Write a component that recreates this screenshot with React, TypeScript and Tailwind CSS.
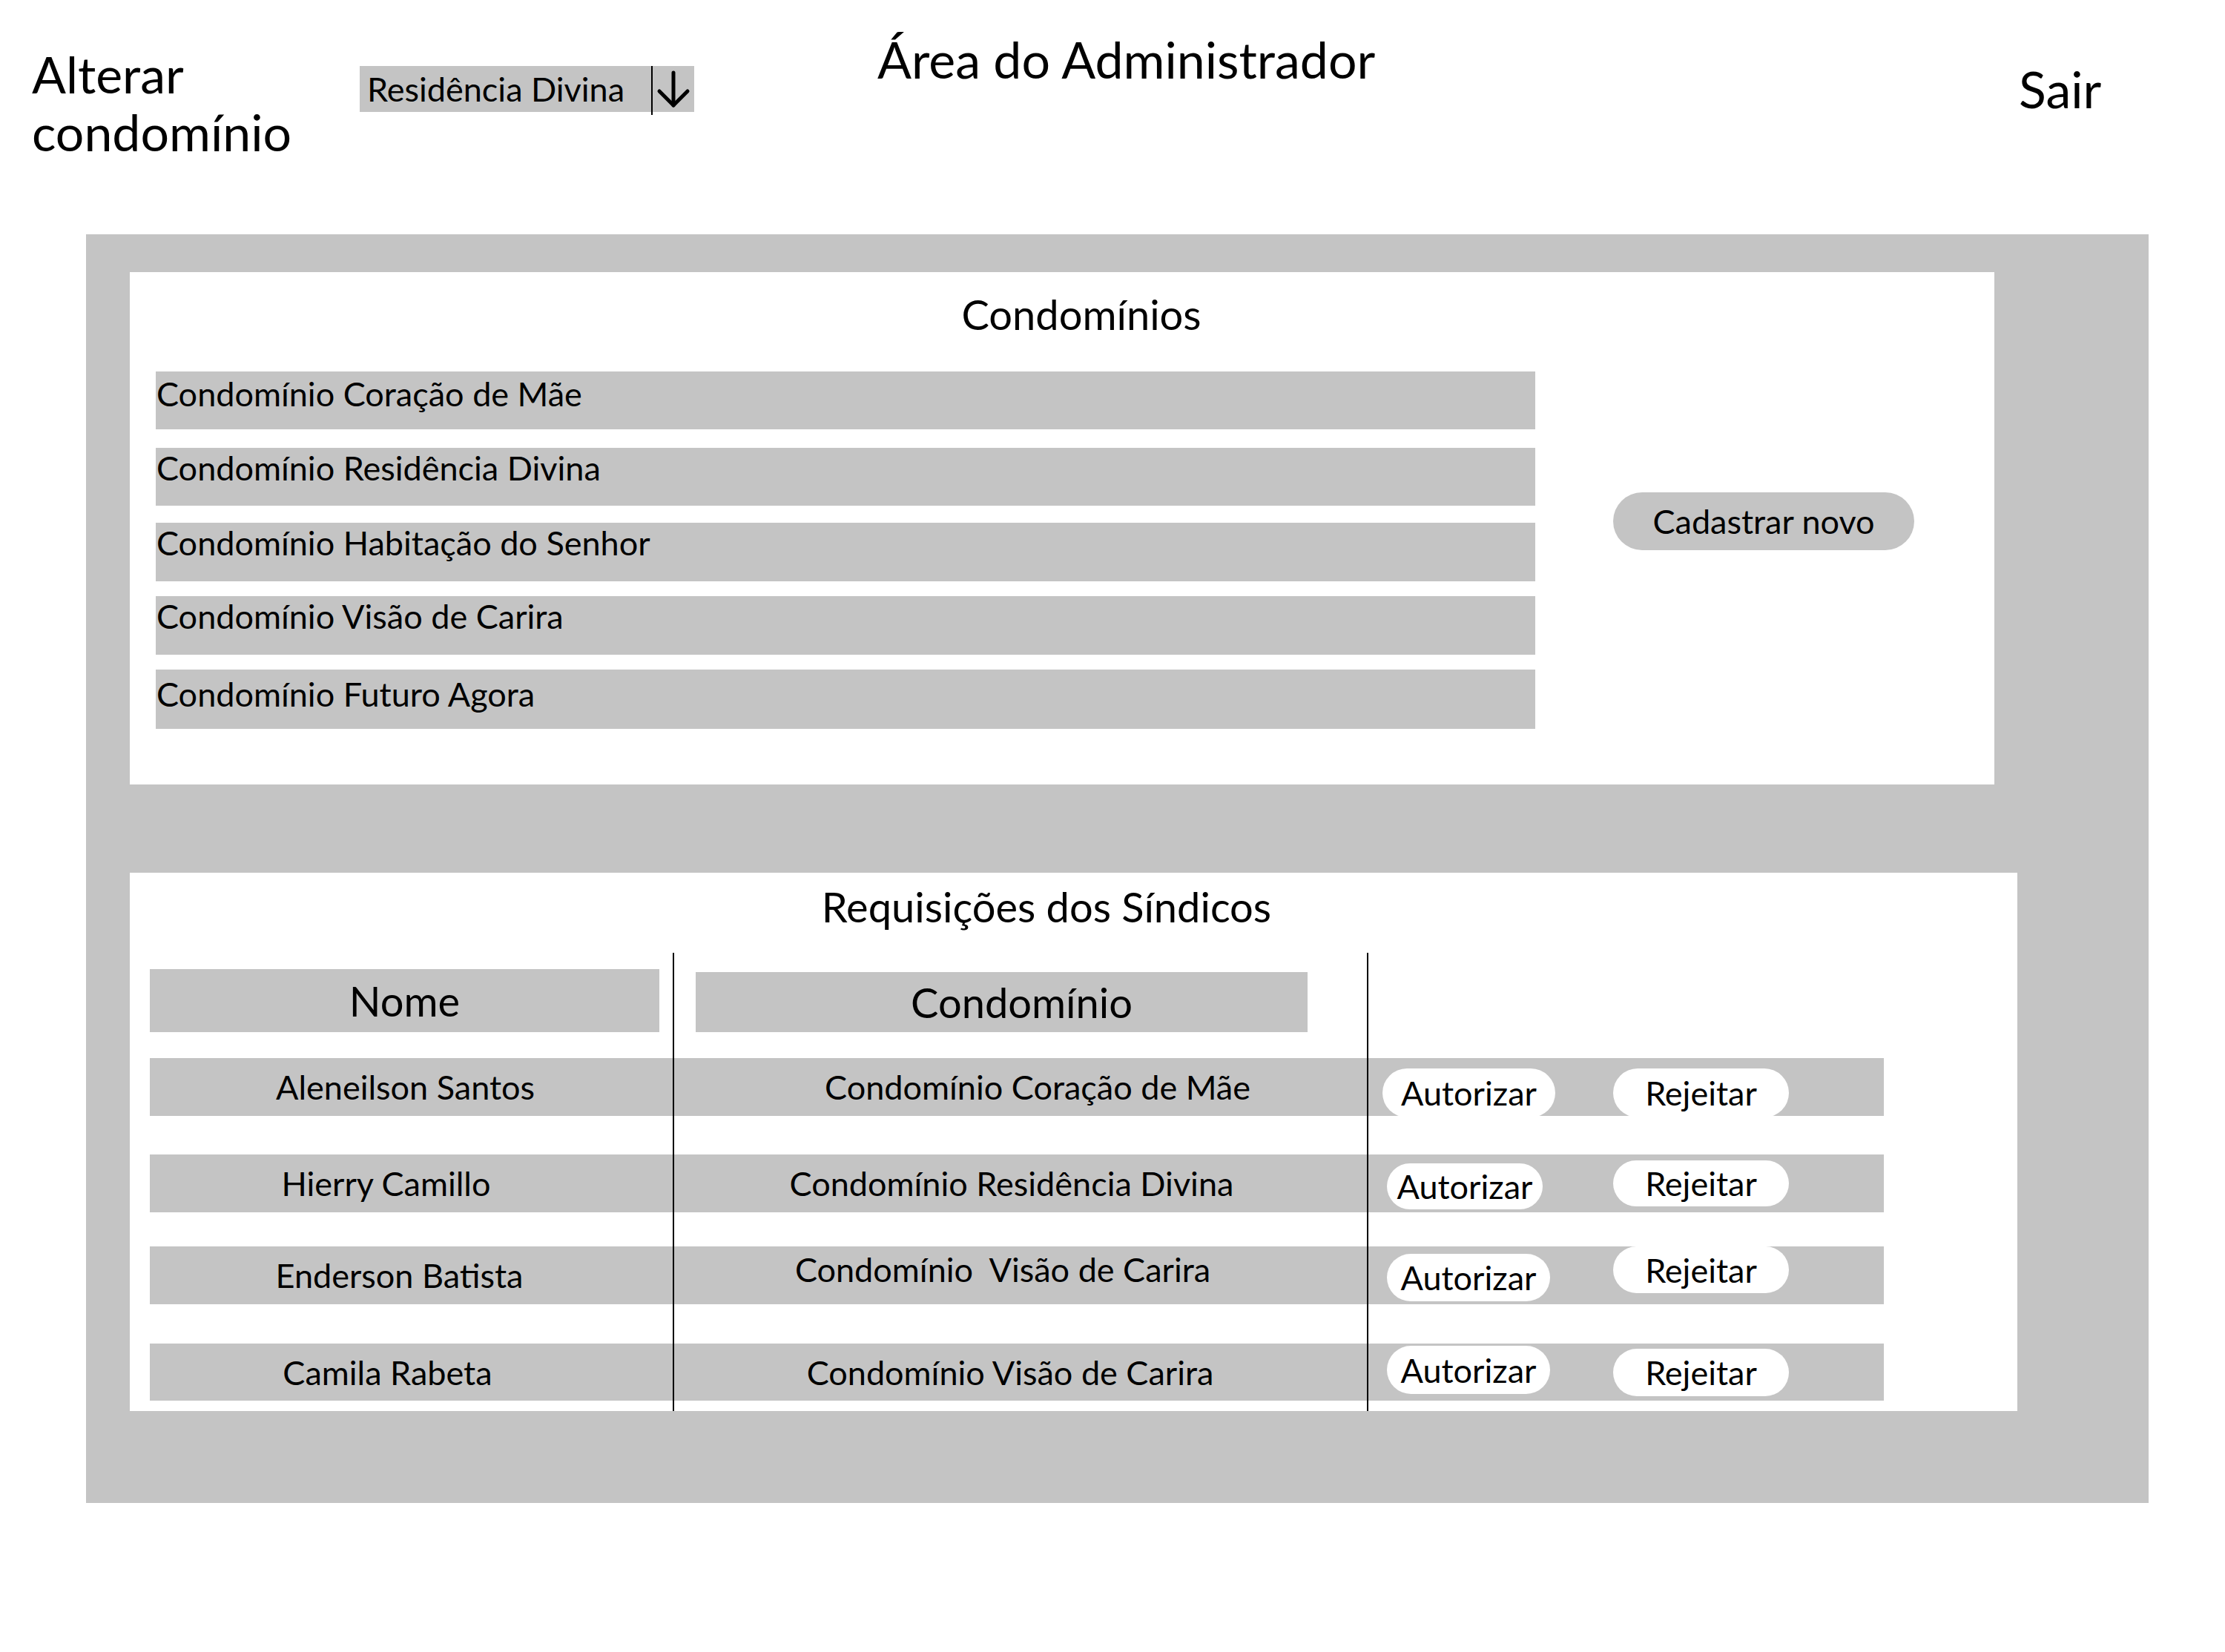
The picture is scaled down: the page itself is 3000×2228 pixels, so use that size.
import React from "react";

const font = { fontFamily: "Lato, 'Noto Sans', sans-serif" };

type Row1 = { t: string; cls: string };
const condRows: Row1[] = [
  { t: "Condomínio Coração de Mãe", cls: "h-[78px] pt-[3px]" },
  { t: "Condomínio Residência Divina", cls: "mt-[25px] h-[78px] pt-0" },
  { t: "Condomínio Habitação do Senhor", cls: "mt-[23px] h-[79px] pt-0" },
  { t: "Condomínio Visão de Carira", cls: "mt-[20px] h-[79px] pt-0" },
  { t: "Condomínio Futuro Agora", cls: "mt-[20px] h-[80px] pt-[6px]" },
];

const rowBox = [
  "mt-[35px] h-[78px]",
  "mt-[52px] h-[78px]",
  "mt-[46px] h-[78px]",
  "mt-[53px] h-[77px]",
];

const names = [
  { t: "Aleneilson Santos", cls: "pr-[16px]" },
  { t: "Hierry Camillo", cls: "pr-[68px]" },
  { t: "Enderson Batista", cls: "pr-[32px]" },
  { t: "Camila Rabeta", cls: "pr-[64px]" },
];

const conds = [
  { t: "Condomínio Coração de Mãe", cls: "pl-[46px]" },
  { t: "Condomínio Residência Divina", cls: "pr-[24px]" },
  { t: "Condomínio  Visão de Carira", cls: "pr-[48px] pb-[16px]" },
  { t: "Condomínio Visão de Carira", cls: "pr-[28px]" },
];

const actions = [
  { a: "ml-[19px] mt-[14px] w-[233px] h-[66px]", r: "ml-[78px] mt-[14px] w-[237px] h-[66px]" },
  { a: "ml-[25px] mt-[12px] w-[210px] h-[62px]", r: "ml-[95px] mt-[8px] w-[237px] h-[62px]" },
  { a: "ml-[25px] mt-[10px] w-[220px] h-[64px]", r: "ml-[85px] mt-0 w-[237px] h-[63px]" },
  { a: "ml-[25px] mt-[3px] w-[220px] h-[65px]", r: "ml-[85px] mt-[7px] w-[237px] h-[64px]" },
];

function ArrowDownIcon() {
  return (
    <svg width="48" height="52" viewBox="0 0 48 52" fill="none" stroke="#000" strokeWidth="5" strokeLinecap="round" strokeLinejoin="round">
      <path d="M24 4 V48" />
      <path d="M5 29 L24 48 L43 29" />
    </svg>
  );
}

export default function App() {
  return (
    <div className="w-[3000px] h-[2228px] bg-white text-black overflow-hidden" style={font}>
      {/* Header */}
      <div className="flex items-start h-[316px]">
        <div className="ml-[43px] mt-[61px] w-[442px] text-[68px] leading-[78px]">
          Alterar
          <br />
          condomínio
        </div>
        <div className="mt-[89px] w-[451px] h-[62px] bg-[#c4c4c4] flex items-start relative">
          <div className="w-[393px] h-[62px] flex items-center pl-[10px] text-[45px] leading-[54px]">
            Residência Divina
          </div>
          <div className="w-[2px] h-[66px] bg-black" />
          <div className="flex-1 h-[62px] flex items-center justify-center">
            <ArrowDownIcon />
          </div>
        </div>
        <div className="ml-[247px] mt-[41px] w-[1539px] text-[68px] leading-[78px]">Área do Administrador</div>
        <div className="mt-[81px] text-[68px] leading-[78px]">Sair</div>
      </div>

      {/* Main gray area */}
      <div className="ml-[116px] w-[2781px] h-[1711px] bg-[#c4c4c4] pt-[51px] pl-[59px]">
        {/* Condomínios panel */}
        <div className="w-[2514px] h-[691px] bg-white flex flex-col">
          <div className="pt-[23px] pl-[52px] text-center text-[56px] leading-[68px]">Condomínios</div>
          <div className="mt-[43px] pl-[35px] flex items-start">
            <div className="w-[1860px] flex flex-col">
              {condRows.map((r) => (
                <div key={r.t} className={"bg-[#c4c4c4] pl-[1px] text-[45px] leading-[54px] " + r.cls}>
                  {r.t}
                </div>
              ))}
            </div>
            <div className="ml-[105px] mt-[163px] w-[406px] h-[78px] rounded-full bg-[#c4c4c4] flex items-center justify-center text-[45px] leading-[54px]">
              Cadastrar novo
            </div>
          </div>
        </div>

        {/* Requisições panel */}
        <div className="mt-[119px] w-[2545px] h-[726px] bg-white flex flex-col">
          <div className="pt-[12px] pr-[73px] text-center text-[56px] leading-[68px]">Requisições dos Síndicos</div>
          <div className="mt-[28px] pl-[27px] flex-1 flex items-stretch">
            {/* Nome column */}
            <div className="w-[705px] flex flex-col">
              <div className="h-[107px] pt-[22px]">
                <div className="w-[687px] h-[85px] bg-[#c4c4c4] flex items-center justify-center text-[56px] leading-[68px]">
                  Nome
                </div>
              </div>
              {names.map((n, i) => (
                <div key={n.t} className={"bg-[#c4c4c4] flex items-center justify-center text-[45px] leading-[54px] " + rowBox[i] + " " + n.cls}>
                  {n.t}
                </div>
              ))}
            </div>
            {/* Condomínio column */}
            <div className="w-[936px] border-l-2 border-black flex flex-col">
              <div className="h-[107px] pt-[26px] pl-[29px]">
                <div className="w-[825px] h-[81px] bg-[#c4c4c4] flex items-center justify-center pl-[54px] text-[56px] leading-[68px]">
                  Condomínio
                </div>
              </div>
              {conds.map((c, i) => (
                <div key={i} className={"bg-[#c4c4c4] flex items-center justify-center whitespace-pre text-[45px] leading-[54px] " + rowBox[i] + " " + c.cls}>
                  {c.t}
                </div>
              ))}
            </div>
            {/* Actions column */}
            <div className="w-[697px] border-l-2 border-black flex flex-col">
              <div className="h-[107px]" />
              {actions.map((a, i) => (
                <div key={i} className={"bg-[#c4c4c4] flex items-start " + rowBox[i]}>
                  <div className={"rounded-full bg-white flex items-center justify-center text-[45px] leading-[54px] " + a.a}>
                    Autorizar
                  </div>
                  <div className={"rounded-full bg-white flex items-center justify-center text-[45px] leading-[54px] " + a.r}>
                    Rejeitar
                  </div>
                </div>
              ))}
            </div>
          </div>
        </div>
      </div>
    </div>
  );
}
